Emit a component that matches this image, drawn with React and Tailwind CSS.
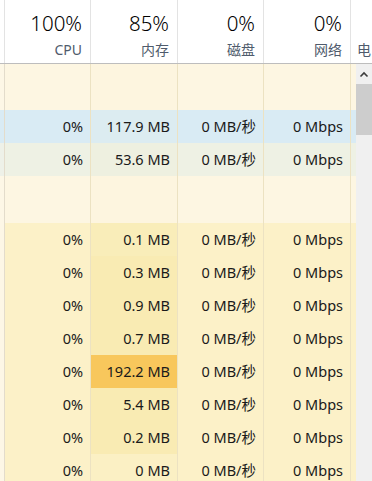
import React from "react";

const FONT = { fontFamily: '"Noto Sans", "Noto Sans CJK SC", sans-serif' };

const headers = [
  { big: "100%", label: "CPU", w: "w-[86px]" },
  { big: "85%", label: "内存", w: "w-[87px]" },
  { big: "0%", label: "磁盘", w: "w-[86px]" },
  { big: "0%", label: "网络", w: "w-[87px]" },
];

function Cell({ w, bg, children }) {
  return (
    <div
      className={`${w} ${bg} h-full shrink-0 flex items-center justify-end pr-[7px] border-r border-[#ece2c2]`}
    >
      {children}
    </div>
  );
}

function Row({ h, base, mem, edge, vals }) {
  return (
    <div className={`flex ${h} text-[14.5px] text-[#1a1a1a]`}>
      <div className={`w-[5px] shrink-0 h-full ${edge} border-r border-[#e3dccb]`} />
      <Cell w="w-[86px]" bg={base}>{vals ? vals[0] : null}</Cell>
      <Cell w="w-[87px]" bg={mem}>{vals ? vals[1] : null}</Cell>
      <Cell w="w-[86px]" bg={base}>{vals ? vals[2] : null}</Cell>
      <Cell w="w-[87px]" bg={base}>{vals ? vals[3] : null}</Cell>
      <div className={`w-[5px] shrink-0 h-full ${base}`} />
    </div>
  );
}

export default function App() {
  const yellowRows = [
    ["0.1 MB", "bg-[#f9edb9]"],
    ["0.3 MB", "bg-[#f9ebb3]"],
    ["0.9 MB", "bg-[#f9ebb3]"],
    ["0.7 MB", "bg-[#f9ebb3]"],
    ["192.2 MB", "bg-[#f8c75c]"],
    ["5.4 MB", "bg-[#f9ebb3]"],
    ["0.2 MB", "bg-[#f9ebb3]"],
    ["0 MB", "bg-[#fbf0c4]"],
  ];
  return (
    <div className="w-[372px] h-[481px] overflow-hidden bg-white" style={FONT}>
      {/* header */}
      <div className="flex h-[64px] border-b border-[#bdbdbd]">
        <div className="w-[5px] shrink-0 border-r border-[#e3e3e3]" />
        {headers.map((hd, i) => (
          <div
            key={i}
            className={`${hd.w} shrink-0 flex flex-col items-end pr-[8px] pt-[13px] border-r border-[#e3e3e3]`}
          >
            <div className="text-[20.5px] leading-[20px] font-light text-black">{hd.big}</div>
            <div className="mt-[10px] text-[14px] leading-[14px] text-[#4f5b6c]">{hd.label}</div>
          </div>
        ))}
        <div className="flex-1 pl-[6px] pt-[43px] text-[14px] leading-[14px] text-[#4f5b6c]">电</div>
      </div>
      {/* body */}
      <div className="flex">
        <div className="w-[356px] shrink-0 overflow-hidden">
          <Row h="h-[46px]" base="bg-[#fdf6e2]" mem="bg-[#fdf5df]" edge="bg-[#fdf7e6]" />
          <Row
            h="h-[33px]"
            base="bg-[#d9ebf4]"
            mem="bg-[#dcecf1]"
            edge="bg-[#d9ebf4]"
            vals={["0%", "117.9 MB", "0 MB/秒", "0 Mbps"]}
          />
          <Row
            h="h-[33px]"
            base="bg-[#eef1e4]"
            mem="bg-[#eef0e0]"
            edge="bg-[#eef1e8]"
            vals={["0%", "53.6 MB", "0 MB/秒", "0 Mbps"]}
          />
          <Row h="h-[47px]" base="bg-[#fdf6e2]" mem="bg-[#fdf5df]" edge="bg-[#fdf7e6]" />
          {yellowRows.map(([m, mb], i) => (
            <Row
              key={i}
              h="h-[33px]"
              base="bg-[#fcf1c8]"
              mem={mb}
              edge="bg-[#fdf7e6]"
              vals={["0%", m, "0 MB/秒", "0 Mbps"]}
            />
          ))}
        </div>
        {/* scrollbar */}
        <div className="w-[16px] shrink-0 bg-[#f0f0f0] flex flex-col">
          <div className="h-[20px] flex items-center justify-center">
            <svg width="10" height="7" viewBox="0 0 10 7">
              <path d="M1.5 5.5 L5 2 L8.5 5.5" fill="none" stroke="#3c3c3c" strokeWidth="1.6" />
            </svg>
          </div>
          <div className="h-[51px] bg-[#cdcdcd]" />
        </div>
      </div>
    </div>
  );
}
